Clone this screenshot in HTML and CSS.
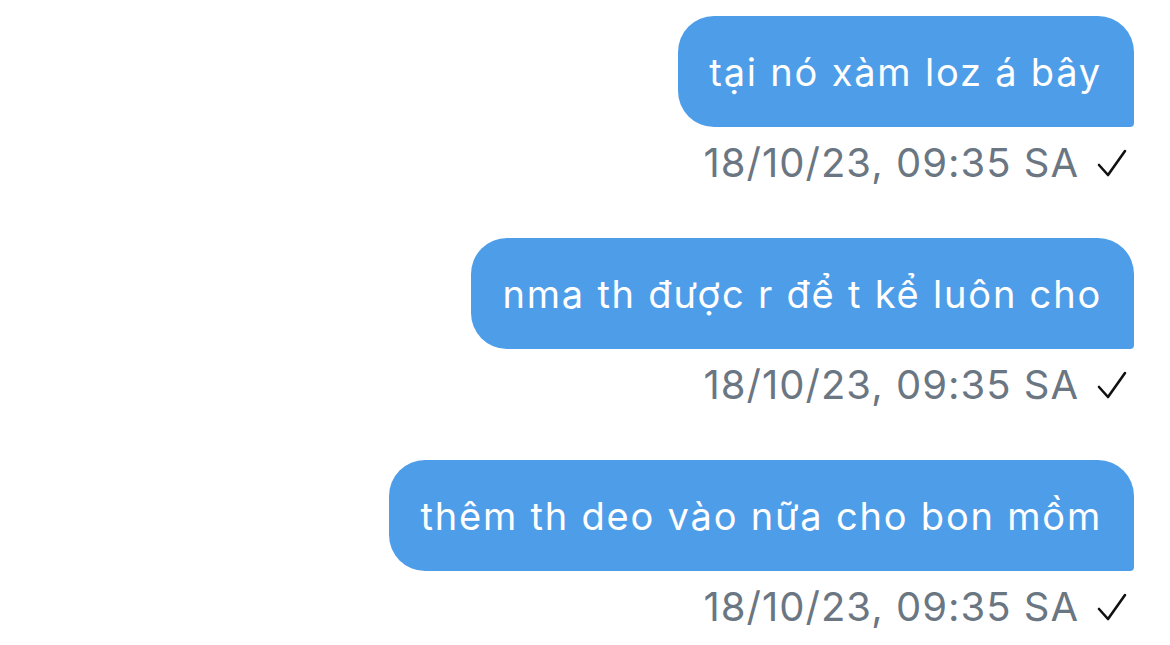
FILE: index.html
```html
<!DOCTYPE html>
<html lang="vi">
<head>
<meta charset="utf-8">
<link rel="stylesheet" href="styles.css">
</head>
<body>
<div class="thread">
  <div class="msg">
    <div class="bubble">tại nó xàm loz á bây</div>
    <div class="meta"><span class="time">18/10/23, 09:35 SA</span><svg class="check" viewBox="0 0 30 28" width="30" height="28"><path d="M2 16 L11 26 L28 2" fill="none" stroke="#111" stroke-width="2.6" stroke-linecap="round" stroke-linejoin="round"/></svg></div>
  </div>
  <div class="msg">
    <div class="bubble">nma th được r để t kể luôn cho</div>
    <div class="meta"><span class="time">18/10/23, 09:35 SA</span><svg class="check" viewBox="0 0 30 28" width="30" height="28"><path d="M2 16 L11 26 L28 2" fill="none" stroke="#111" stroke-width="2.6" stroke-linecap="round" stroke-linejoin="round"/></svg></div>
  </div>
  <div class="msg">
    <div class="bubble">thêm th deo vào nữa cho bon mồm</div>
    <div class="meta"><span class="time">18/10/23, 09:35 SA</span><svg class="check" viewBox="0 0 30 28" width="30" height="28"><path d="M2 16 L11 26 L28 2" fill="none" stroke="#111" stroke-width="2.6" stroke-linecap="round" stroke-linejoin="round"/></svg></div>
  </div>
</div>
</body>
</html>
```
FILE: styles.css
```css
html, body {
  margin: 0;
  padding: 0;
  background: #ffffff;
}
body {
  font-family: Inter, "Liberation Sans", Arial, sans-serif;
  width: 1170px;
  height: 645px;
  overflow: hidden;
}
.thread {
  display: flex;
  flex-direction: column;
  align-items: flex-end;
  padding: 16px 36px 0 0;
  gap: 55px;
}
.msg {
  display: flex;
  flex-direction: column;
  align-items: flex-end;
}
.bubble {
  background: #4e9de9;
  color: #ffffff;
  height: 111px;
  box-sizing: border-box;
  display: flex;
  align-items: center;
  padding: 0 32px 0 31px;
  font-size: 38px;
  letter-spacing: 1.8px;
  border-radius: 36px 36px 4px 36px;
}
.meta {
  display: flex;
  align-items: center;
  gap: 19px;
  margin-top: 16px;
  margin-right: 7px;
  height: 40px;
}
.time {
  color: #6b7683;
  font-size: 40px;
  line-height: 40px;
  letter-spacing: 1px;
  margin-right: -1px;
}
.check {
  display: block;
}
```
